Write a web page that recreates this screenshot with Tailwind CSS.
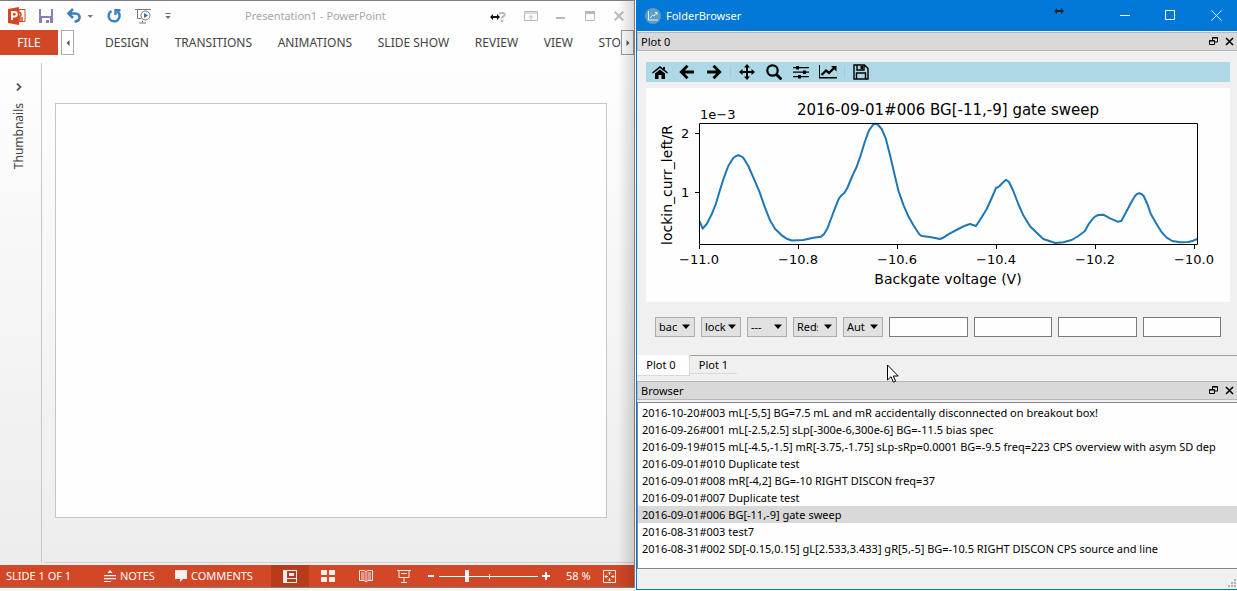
<!DOCTYPE html>
<html lang="en">
<head>
<meta charset="utf-8">
<title>FolderBrowser</title>
<script src="https://cdn.jsdelivr.net/npm/@tailwindcss/browser@4"></script>
</head>
<body class="h-screen overflow-hidden bg-[#f4f4f4] font-['Noto_Sans',sans-serif] text-[12px] leading-4 text-black">
<div class="grid h-full grid-cols-[636fr_601fr]">

  <!-- Presentation window -->
  <section class="relative mb-[3px] mr-px flex min-w-0 flex-col border-y border-r border-[#7f7f7f] bg-linear-to-b from-[#fefefe] from-10% to-[#ececec] text-[#444]">
    <header class="flex h-[29px] shrink-0 items-center pl-2 pr-[10px]">
      <svg class="size-[18px]" viewBox="0 0 18 18"><path fill="#d24726" d="M0 2 11 0v18L0 16z"/><path fill="#fff" stroke="#d24726" d="M11 2.5h6v12h-6z"/><path fill="none" stroke="#d24726" stroke-width="1.5" d="M11 5.500a2 2 0 1 1 0 4M11 11h4M11 13h4"/><path fill="none" stroke="#fff" stroke-width="2" d="M4 13V5h2.500a2 2 0 0 1 0 4.500H4"/></svg>
      <button aria-label="Save" class="ml-3"><svg class="size-4" viewBox="0 0 16 16"><path fill="#8a7fb5" d="M1 1h14v14H1z"/><path fill="#fff" d="M3 1h10v7H3zM4 10h8v5h-1v-3H8v3H4z"/></svg></button>
      <button aria-label="Undo" class="ml-3"><svg class="size-4" viewBox="0 0 16 16"><path fill="none" stroke="#3b7fbd" stroke-width="2.600" d="M2.500 5.500H9c3.500 0 5 2 4.500 4.500-.4 2-2.500 3.500-5 3.500M7 1 2.500 5.500 7 10"/></svg></button>
      <button aria-label="Undo history" class="ml-1"><svg class="size-2" viewBox="0 0 8 8"><path fill="#777" d="M1.500 3h5.500L4.250 6z"/></svg></button>
      <button aria-label="Redo" class="ml-3"><svg class="size-4" viewBox="0 0 16 16"><path fill="none" stroke="#3b7fbd" stroke-width="2.400" d="M5.500 3a5.500 5.500 0 1 0 6 .5M9.500 7V2.200H14.500"/></svg></button>
      <button aria-label="Start slide show" class="ml-3"><svg class="h-4 w-[18px]" viewBox="0 0 18 16"><path fill="none" stroke="#777" d="M1 1.500h16M3.500 2v8.500h4M8.500 12.500v2M5 15h7"/><circle cx="11.500" cy="7.500" r="4.500" fill="#fff" stroke="#777"/><path fill="#3b6f9f" d="M10 5v5l4-2.500z"/></svg></button>
      <button aria-label="Customize toolbar" class="ml-3"><svg class="size-2" viewBox="0 0 8 8"><path fill="#666" d="M1.500 1h5v1h-5zM1.500 4h5L4 7z"/></svg></button>
      <h1 class="flex-1 pr-10 text-center text-[11px] font-normal text-[#a6a6a6]">Presentation1 - PowerPoint</h1>
      <button aria-label="Help" class="text-[15px] font-bold text-[#b9b9b9]">?</button>
      <button aria-label="Ribbon display options" class="ml-[18px]"><svg class="h-4 w-[14px]" viewBox="0 0 14 16"><path fill="none" stroke="#b9b9b9" d="M.5 3.500h13v9H.5zM0 5h14M7 12V7.500M5 9.500l2-2 2 2"/></svg></button>
      <button aria-label="Minimize" class="ml-[18px]"><svg class="h-4 w-[10px]" viewBox="0 0 10 16"><path fill="#b9b9b9" d="M0 9h9v2H0z"/></svg></button>
      <button aria-label="Maximize" class="ml-[18px]"><svg class="h-4 w-[12px]" viewBox="0 0 12 16"><path fill="none" stroke="#b9b9b9" d="M1.500 3.500h9v9h-9z"/><path fill="#b9b9b9" d="M1 3h10v3H1z"/></svg></button>
      <button aria-label="Close" class="ml-[18px]"><svg class="h-4 w-[10px]" viewBox="0 0 10 16"><path stroke="#b9b9b9" stroke-width="2" d="m.7 3.700 8.600 8.600m0-8.600-8.600 8.600"/></svg></button>
    </header>
    <nav class="flex h-[25px] shrink-0 items-center">
      <button class="h-full w-[58px] shrink-0 bg-[#d24726] text-white">FILE</button>
      <button aria-label="Scroll tabs left" class="ml-[3px] flex h-full w-[13px] shrink-0 items-center justify-center border border-[#ababab] bg-white"><svg class="size-2" viewBox="0 0 8 8"><path fill="#555" d="M5.500 1v6l-3-3z"/></svg></button>
      <div class="flex min-w-0 flex-1 justify-between overflow-hidden whitespace-nowrap pl-[31px]">
        <a href="#">DESIGN</a><a href="#">TRANSITIONS</a><a href="#">ANIMATIONS</a><a href="#">SLIDE SHOW</a><a href="#">REVIEW</a><a href="#">VIEW</a><a href="#">STO</a>
      </div>
      <button aria-label="Scroll tabs right" class="flex h-full w-[13px] shrink-0 items-center justify-center border border-[#999] bg-white"><svg class="size-2" viewBox="0 0 8 8"><path fill="#555" d="M2.500 1v6l3-3z"/></svg></button>
    </nav>
    <div class="mb-0.5 mt-2 flex min-h-0 flex-1">
      <aside class="flex w-[42px] shrink-0 flex-col items-center border-r border-[#c8c8c8] pr-1 pt-5">
        <button aria-label="Expand thumbnails"><svg class="size-2" viewBox="0 0 8 8"><path fill="none" stroke="#555" stroke-width="1.800" d="m2 .5 3.500 3.500L2 7.500"/></svg></button>
        <span class="mt-3 rotate-180 [writing-mode:vertical-rl]">Thumbnails</span>
      </aside>
      <main class="ml-0.5 flex flex-1 border-b border-[#d0d0d0] pb-11 pl-[11px] pr-[27px] pt-10">
        <div class="flex-1 border border-[#c6c6c6] bg-[#fefefe]"></div>
      </main>
    </div>
    <footer class="flex h-[22px] shrink-0 items-center bg-[#d24726] pl-1.5 pr-[18px] text-[11px] text-white">
      <span class="w-[98px]">SLIDE 1 OF 1</span>
      <button class="flex w-[71px] items-center gap-1"><svg class="size-3" viewBox="0 0 12 12"><path fill="#fff" d="M3.500 3h5L6 0zM0 5h12v1.200H0zM0 8h12v1.200H0zM0 11h7v1H0z"/></svg>NOTES</button>
      <button class="flex w-[96px] items-center gap-1"><svg class="size-3" viewBox="0 0 12 12"><path fill="#fceeea" d="M0 0h12v9H8l-3 3V9H0z"/></svg>COMMENTS</button>
      <button aria-label="Normal view" class="flex h-full w-[38px] items-center justify-center bg-[#b83b1b]"><svg class="h-[13px] w-[14px]" viewBox="0 0 14 13"><path fill="#fceeea" fill-rule="evenodd" d="M0 0h14v13H0zM4 1h9v7H4zM4 9h9v3H4z"/><path fill="#fceeea" d="M6 3h5v3H6z"/></svg></button>
      <button aria-label="Slide sorter" class="flex w-[38px] justify-center"><svg class="size-[14px]" viewBox="0 0 14 14"><path fill="#fceeea" d="M0 1h6v5H0zM8 1h6v5H8zM0 8h6v5H0zM8 8h6v5H8z"/></svg></button>
      <button aria-label="Reading view" class="flex w-[38px] justify-center"><svg class="size-[14px]" viewBox="0 0 14 14"><path fill="none" stroke="#fceeea" d="M7 2.500 5 1.500H.5v10H5l2 1.500 2-1.500h4.500v-10H9zV13M2 4h3.500M2 6h3.500M2 8h3.500M2 10h3.500M8.500 4H12M8.500 6H12M8.500 8H12M8.500 10H12"/></svg></button>
      <button aria-label="Slide show" class="flex w-[38px] justify-center"><svg class="size-[14px]" viewBox="0 0 14 14"><path fill="none" stroke="#fceeea" d="M0 1.500h14M2 2v6.500h10V2M4 4.500h6M7 8.500V13M4 13.500h6"/></svg></button>
      <button aria-label="Zoom out" class="ml-1"><svg class="size-2" viewBox="0 0 8 8"><path fill="#fff" d="M1 3h6v2H1z"/></svg></button>
      <div class="relative mx-1 flex h-3 flex-1 items-center">
        <span class="absolute inset-x-0 top-1.5 h-px bg-white"></span><span class="absolute left-1/2 top-1 h-[5px] w-px bg-white"></span>
        <input type="range" aria-label="Zoom" value="27" class="relative h-3 w-full appearance-none bg-transparent [&::-webkit-slider-thumb]:h-3 [&::-webkit-slider-thumb]:w-1 [&::-webkit-slider-thumb]:appearance-none [&::-webkit-slider-thumb]:bg-white">
      </div>
      <button aria-label="Zoom in"><svg class="size-2" viewBox="0 0 8 8"><path fill="#fff" d="M0 3h8v2H0zM3 0h2v8H3z"/></svg></button>
      <button class="ml-4 w-[37px] text-left">58 %</button>
      <button aria-label="Fit slide to window"><svg class="size-[13px]" viewBox="0 0 13 13"><path fill="none" stroke="#fceeea" d="M.5.500h12v12H.5zM6.500 2v3M5 3.500l1.500-1.500L8 3.500M6.500 11V8M5 9.500 6.500 11 8 9.500M2 6.500h3M3.500 5 2 6.500 3.500 8M11 6.500H8M9.500 5 11 6.500 9.500 8"/></svg></button>
    </footer>
    <div class="pointer-events-none absolute inset-y-0 right-0 w-4 bg-linear-to-r from-transparent to-black/15"></div>
    <svg class="absolute right-[134px] top-3 h-2 w-[10px]" viewBox="0 0 10 8"><path fill="#111" d="M0 4 3 1v2h4V1l3 3-3 3V5H3v2z"/></svg>
  </section>

  <!-- FolderBrowser window -->
  <section class="relative mb-px flex min-w-0 flex-col border-b border-l border-[#0078d7] bg-[#f0f0f0]">
    <header class="flex h-[31px] shrink-0 items-center bg-[#0078d7] pl-2 pr-[15px] text-white">
      <svg class="size-4" viewBox="0 0 16 16"><circle cx="8" cy="8" r="8" fill="#5d9cc4"/><path fill="none" stroke="#e5f0f6" d="M3.500 3v9H13M5 10l2.500-3 1.500 1 3-3.500M10 4.500h2V7"/></svg>
      <h2 class="ml-[5px] flex-1 text-[11px]">FolderBrowser</h2>
      <button aria-label="Minimize"><svg class="size-[11px]" viewBox="0 0 11 11"><path fill="#fff" d="M0 5h10v1H0z"/></svg></button>
      <button aria-label="Maximize" class="ml-[34px]"><svg class="size-[11px]" viewBox="0 0 11 11"><path fill="none" stroke="#fff" d="M.5.500h9v9h-9z"/></svg></button>
      <button aria-label="Close" class="ml-[35px]"><svg class="size-[11px]" viewBox="0 0 11 11"><path stroke="#fff" d="m.5.500 10 10m0-10-10 10"/></svg></button>
    </header>
    <div class="mt-px flex h-[19px] shrink-0 items-center border border-r-0 border-[#b8b8b8] bg-[#d9d9d9] pl-[3px] pr-[3px] text-[11px]">
      <h3 class="flex-1">Plot 0</h3>
      <button aria-label="Float plot panel"><svg class="size-[9px]" viewBox="0 0 9 9"><path fill="none" stroke="#000" d="M.5 3.500h5v4h-5zM.5 4h5M3.500 3V.5h5v4.500H6M3.500 1h5"/></svg></button>
      <button aria-label="Close plot panel" class="ml-[7px]"><svg class="size-[9px]" viewBox="0 0 9 9"><path stroke="#000" stroke-width="1.600" d="m1 1 7 7m0-7-7 7"/></svg></button>
    </div>
    <div class="ml-[9px] mr-[7px] mt-[11px] flex h-5 shrink-0 items-center bg-[#add8e6] pl-1.5">
      <button aria-label="Home"><svg class="size-4" viewBox="0 0 16 16"><path d="M0 8.500 8 2l3 2.500V3h2v3l3 2.500-1 1L8 4 1 9.500zM3 9.500l5-4 5 4V15H9.500v-4h-3v4H3z"/></svg></button>
      <button aria-label="Back" class="ml-[11px]"><svg class="size-4" viewBox="0 0 16 16"><path fill="none" stroke="#000" stroke-width="2.800" d="M15 8H3M8.500 1.800 2.300 8l6.200 6.200"/></svg></button>
      <button aria-label="Forward" class="ml-[11px]"><svg class="size-4" viewBox="0 0 16 16"><path fill="none" stroke="#000" stroke-width="2.800" d="M1 8h12M7.500 1.800 13.700 8l-6.200 6.200"/></svg></button>
      <span class="ml-2 h-3 w-px bg-[#9fcbdc]"></span>
      <button aria-label="Pan" class="ml-2"><svg class="size-4" viewBox="0 0 16 16"><path d="m8 0 3 3.500H9V7h3.500V5L16 8l-3.500 3V9H9v3.500h2L8 16l-3-3.500h2V9H3.500v2L0 8l3.500-3v2H7V3.500H5z"/></svg></button>
      <button aria-label="Zoom to rectangle" class="ml-[11px]"><svg class="size-4" viewBox="0 0 16 16"><circle cx="6.500" cy="6.500" r="5.200" fill="none" stroke="#000" stroke-width="2.200"/><path stroke="#000" stroke-width="2.800" d="m10.500 10.500 5 5"/></svg></button>
      <button aria-label="Configure subplots" class="ml-[11px]"><svg class="size-4" viewBox="0 0 16 16"><path d="M0 3h16v1.200H0zM0 7.500h16v1.200H0zM0 12h16v1.200H0zM3 2h3v3.500H3zM10 6.500h3V10h-3zM5 11h3v3.500H5z"/></svg></button>
      <button aria-label="Edit curves" class="ml-[10px]"><svg class="h-4 w-[18px]" viewBox="0 0 18 16"><path d="M0 1h1v12h17v1.500H0z"/><path fill="none" stroke="#000" stroke-width="2.400" d="m2.500 11 4.500-4.500 3 2.500 5.500-5.500"/><path d="M12 2h5.500v5.500z"/></svg></button>
      <span class="ml-[7px] h-3 w-px bg-[#9fcbdc]"></span>
      <button aria-label="Save figure" class="ml-2"><svg class="size-4" viewBox="0 0 16 16"><path fill="none" stroke="#000" stroke-width="1.400" d="M1 1h10.500L15 4.500V15H1zM3.500 15V9h9v6M4 1v5h7V1"/><path d="M7.500 2H10v3H7.500z"/></svg></button>
    </div>
    <div class="ml-[9px] mr-[7px] mt-1.5 shrink-0 bg-[#fefefe]">
      <svg class="block w-full font-['DejaVu_Sans',sans-serif] text-[13px]" viewBox="0 0 584 214" role="img" aria-label="Gate sweep plot">
        <polyline fill="none" stroke="#1f77b4" stroke-width="2" stroke-linejoin="round" points="53.7,133.3 56.7,140.7 60.7,136 65.7,126.3 69.7,116.3 74,102 78,89.3 82.3,78 87.3,70 90,68 92.3,67.3 94.500,68 97.3,69.700 102.3,78 107.3,89.3 113.3,103.3 119,119.7 124,132.3 129,140.7 135.7,147.3 140.7,150.7 145.7,152.5 157.3,152 167.3,149.7 175,148.7 178.3,145.7 181.7,139.7 185.7,129 189.7,118.3 193,110.3 196,106.7 198.3,105 201.3,100 206.3,88 210.7,78.7 214.7,67.3 219,53.3 223,42.3 227.3,36.500 229.500,35.700 231.7,36.500 235.7,41 239.7,50.3 244,67 248,84.3 252.3,102.3 257.3,116.7 262.3,128.3 267.3,137 273.3,146.3 275.7,148 284,149 294,151 297.3,149.7 304,145.3 312.3,141 319,137.7 324,136 330,138 335.7,129.3 340.7,121 345.7,110 350,100 353.3,98.3 356.7,94.7 360,91.7 363,94 367.3,103 372.3,116 377.3,127.3 384,138.3 392.3,146.3 397.3,151 404,153.3 409.3,155 417.3,154.3 425.7,152 432.3,148 438.7,143.3 442.3,136.7 447.3,130 450,128 452.3,127 457.3,126.7 464,130.3 471.7,133.7 475.3,133 480.7,123 485,114.7 489,108 491,106 493.3,105.3 495.500,106 497.7,108 501.3,116 504.7,125.7 510,135 515,143.3 520.7,149.7 526.3,153 534,154.300 542.3,154 547.3,152.7 551,151"/>
        <path fill="none" stroke="#000" d="M53.500 35.500h498v121h-498zM53.500 157v4M152.500 157v4M251.500 157v4M350.500 157v4M449.500 157v4M548.500 157v4M53 45.500h-4M53 104.500h-4"/>
        <g text-anchor="middle">
          <text x="53" y="176">−11.0</text><text x="152" y="176">−10.8</text><text x="251" y="176">−10.6</text><text x="350" y="176">−10.4</text><text x="449" y="176">−10.2</text><text x="548" y="176">−10.0</text>
          <text x="302" y="196" class="text-[14px]">Backgate voltage (V)</text>
          <text x="302" y="27" class="text-[15px]">2016-09-01#006 BG[-11,-9] gate sweep</text>
          <text transform="translate(26 97) rotate(-90)" class="text-[14px]">lockin_curr_left/R</text>
        </g>
        <text x="54" y="31">1e−3</text><text x="35" y="50">2</text><text x="35" y="109">1</text>
      </svg>
    </div>
    <form class="ml-[18px] mr-4 mt-[15px] flex h-5 shrink-0 gap-1.5 text-[11px]">
      <div class="relative w-10"><select aria-label="X axis" class="h-full w-full appearance-none border border-[#adadad] bg-[#e1e1e1] pl-[3px] pr-3.5"><option>bac</option></select><svg class="pointer-events-none absolute right-[5px] top-1.5 size-2" viewBox="0 0 8 8"><path d="M0 1.500h8L4 6z"/></svg></div>
      <div class="relative w-10"><select aria-label="Y axis" class="h-full w-full appearance-none border border-[#adadad] bg-[#e1e1e1] pl-[3px] pr-3.5"><option>lock</option></select><svg class="pointer-events-none absolute right-[5px] top-1.5 size-2" viewBox="0 0 8 8"><path d="M0 1.500h8L4 6z"/></svg></div>
      <div class="relative w-10"><select aria-label="Z axis" class="h-full w-full appearance-none border border-[#adadad] bg-[#e1e1e1] pl-[3px] pr-3.5"><option>---</option></select><svg class="pointer-events-none absolute right-[5px] top-1.5 size-2" viewBox="0 0 8 8"><path d="M0 1.500h8L4 6z"/></svg></div>
      <div class="relative w-11"><select aria-label="Colormap" class="h-full w-full appearance-none border border-[#adadad] bg-[#e1e1e1] pl-[3px] pr-[18px]"><option>Reds</option></select><svg class="pointer-events-none absolute right-[5px] top-1.5 size-2" viewBox="0 0 8 8"><path d="M0 1.500h8L4 6z"/></svg></div>
      <div class="relative w-10"><select aria-label="Aspect" class="h-full w-full appearance-none border border-[#adadad] bg-[#e1e1e1] pl-[3px] pr-3.5"><option>Aut</option></select><svg class="pointer-events-none absolute right-[5px] top-1.5 size-2" viewBox="0 0 8 8"><path d="M0 1.500h8L4 6z"/></svg></div>
      <input aria-label="X limits" class="min-w-0 flex-1 border border-[#7a7a7a] bg-[#fefefe]">
      <input aria-label="Y limits" class="min-w-0 flex-1 border border-[#7a7a7a] bg-[#fefefe]">
      <input aria-label="Z limits" class="min-w-0 flex-1 border border-[#7a7a7a] bg-[#fefefe]">
      <input aria-label="Filter" class="min-w-0 flex-1 border border-[#7a7a7a] bg-[#fefefe]">
    </form>
    <div class="mt-[18px] flex h-[26px] shrink-0 items-start border-t border-[#a0a0a0] text-[11px]" role="tablist">
      <button role="tab" aria-selected="true" class="-mt-px h-[21px] w-[53px] border-b border-r border-[#d9d9d9] bg-[#fefefe] pr-1">Plot 0</button>
      <button role="tab" class="h-[18px] w-[47px] border-b border-[#d9d9d9]">Plot 1</button>
    </div>
    <div class="flex h-[19px] shrink-0 items-center border border-r-0 border-[#b8b8b8] bg-[#d9d9d9] pl-[3px] pr-[3px] text-[11px]">
      <h3 class="flex-1">Browser</h3>
      <button aria-label="Float browser panel"><svg class="size-[9px]" viewBox="0 0 9 9"><path fill="none" stroke="#000" d="M.5 3.500h5v4h-5zM.5 4h5M3.500 3V.5h5v4.500H6M3.500 1h5"/></svg></button>
      <button aria-label="Close browser panel" class="ml-[7px]"><svg class="size-[9px]" viewBox="0 0 9 9"><path stroke="#000" stroke-width="1.600" d="m1 1 7 7m0-7-7 7"/></svg></button>
    </div>
    <ul class="mt-0.5 flex-1 overflow-hidden whitespace-nowrap border-y border-l border-[#828790] bg-[#fefefe] pt-px text-[11px] leading-[17px] *:pl-1">
      <li>2016-10-20#003 mL[-5,5] BG=7.5 mL and mR accidentally disconnected on breakout box!</li>
      <li>2016-09-26#001 mL[-2.5,2.5] sLp[-300e-6,300e-6] BG=-11.5 bias spec</li>
      <li>2016-09-19#015 mL[-4.5,-1.5] mR[-3.75,-1.75] sLp-sRp=0.0001 BG=-9.5 freq=223 CPS overview with asym SD dep</li>
      <li>2016-09-01#010 Duplicate test</li>
      <li>2016-09-01#008 mR[-4,2] BG=-10 RIGHT DISCON freq=37</li>
      <li>2016-09-01#007 Duplicate test</li>
      <li class="bg-[#d9d9d9]">2016-09-01#006 BG[-11,-9] gate sweep</li>
      <li>2016-08-31#003 test7</li>
      <li>2016-08-31#002 SD[-0.15,0.15] gL[2.533,3.433] gR[5,-5] BG=-10.5 RIGHT DISCON CPS source and line</li>
    </ul>
    <footer class="flex h-5 shrink-0 items-end justify-end pb-0.5 pr-px">
      <svg class="size-2" viewBox="0 0 8 8"><path fill="#b5b5b5" d="M6 0h2v2H6zM3 3h2v2H3zM6 3h2v2H6zM0 6h2v2H0zM3 6h2v2H3zM6 6h2v2H6z"/></svg>
    </footer>
    <svg class="absolute right-[173px] top-[7px] h-2 w-[10px]" viewBox="0 0 10 8"><path fill="#222" d="M0 4 3 1v2h4V1l3 3-3 3V5H3v2z"/></svg>
    <svg class="absolute left-[250px] top-[364px] h-[19px] w-3" viewBox="0 0 12 19"><path fill="#fff" stroke="#000" d="M.5 1v15l3.500-3.300 2.400 5.500 2.200-1L6.300 12h4.900z"/></svg>
  </section>
</div>
</body>
</html>
